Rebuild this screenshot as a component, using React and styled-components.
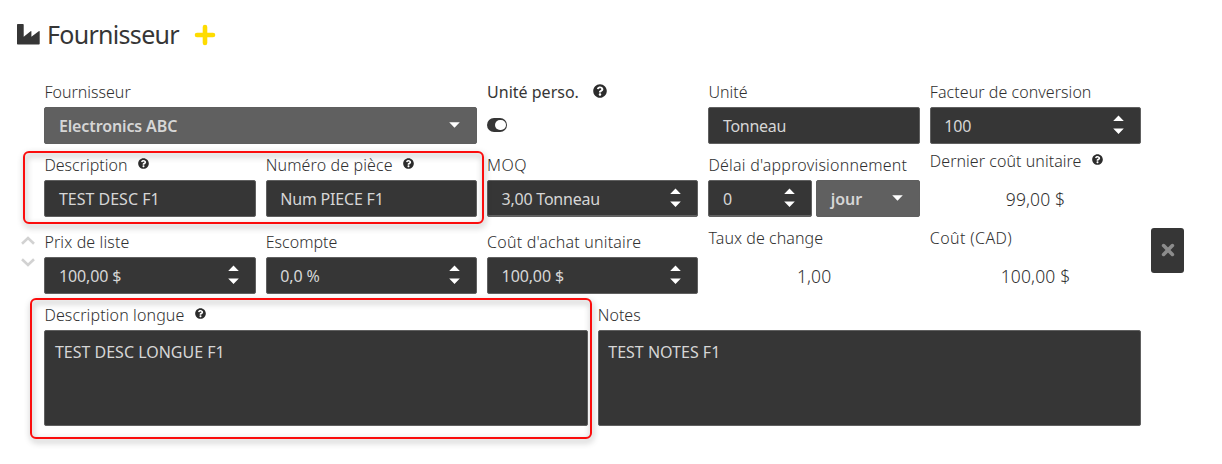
import React from 'react';
import styled, { createGlobalStyle, css } from 'styled-components';
import { FaQuestionCircle } from 'react-icons/fa';

const Global = createGlobalStyle`
  * { box-sizing: border-box; }
  body { margin: 0; background: #fff; color: #363636; font: 300 16px/20px "Noto Sans", "Open Sans", sans-serif; }
`;

const Page = styled.main`
  width: 1222px;
  height: 464px;
  overflow: hidden;
`;

const Header = styled.header`
  display: flex;
  align-items: center;
  height: 80px;
  padding: 0 0 11px 17px;
`;

const Title = styled.h1`
  margin: -2px 15px 0 7px;
  font-size: 25px;
  font-weight: 400;
  line-height: 32px;
  letter-spacing: -0.7px;
`;

const Body = styled.section`
  display: flex;
  padding-left: 21px;
`;

const Sorter = styled.div`
  display: flex;
  flex-direction: column;
  gap: 13px;
  width: 23.4px;
  padding-top: 156px;
`;

const Form = styled.div`
  position: relative;
  width: 1096.8px;
`;

const Grid = styled.div`
  display: grid;
  grid-template-columns: repeat(5, 1fr);
  grid-template-rows: 64px 64px 64px;
  column-gap: 10px;
  row-gap: 9px;
`;

const LongGrid = styled.div`
  display: grid;
  grid-template-columns: 1fr 1fr;
  column-gap: 10px;
  margin-top: 9px;
`;

const Cell = styled.div`
  display: flex;
  flex-direction: column;
  min-width: 0;
  ${p => p.$wide && css`grid-column: span 2;`}
  ${p => p.$lowered && css`margin-top: 4px; margin-bottom: -4px;`}
`;

const Label = styled.label`
  display: flex;
  flex: none;
  height: ${p => (p.$compact ? 20 : 27)}px;
  padding-top: ${p => (p.$compact ? 0 : 2)}px;
  margin-top: ${p => (p.$compact ? -2 : 0)}px;
  font-weight: ${p => (p.$strong ? 400 : 330)};
  letter-spacing: ${p => p.$track || 0}px;
  white-space: nowrap;
  color: ${p => (p.$strong ? '#363636' : '#303030')};
`;

const Help = styled(FaQuestionCircle)`
  flex: none;
  width: ${p => (p.$large ? 14 : 11)}px;
  height: ${p => (p.$large ? 14 : 11)}px;
  margin: ${p => (p.$large ? '2px 0 0 14px' : '3px 0 0 10.5px')};
  color: #2c2c2c;
`;

const Field = styled.div`
  display: flex;
  align-items: center;
  justify-content: space-between;
  flex: 1 1 0;
  height: 37px;
  min-height: 37px;
  padding: 0 16px 0 13.5px;
  border: 1px solid #606060;
  border-radius: 2px;
  background: #363636;
  box-shadow: ${p => (p.$thick ? 'inset 0 -1px #606060' : 'none')};
  color: #d6d6d6;
  font-weight: 400;
  letter-spacing: ${p => p.$track || 0}px;
  white-space: nowrap;
`;

const Select = styled(Field)`
  border-color: #5f5f5f;
  background: #606060;
  font-weight: 600;
`;

const Area = styled.div`
  height: 96px;
  padding: 11px 9.500px;
  border: 1px solid #606060;
  border-radius: 2px;
  background: #363636;
  color: #d6d6d6;
  font-weight: 400;
  letter-spacing: ${p => p.$track || 0}px;
`;

const Pair = styled.div`
  display: grid;
  grid-template-columns: 1fr 1fr;
  gap: 4px;
`;

const Value = styled.div`
  padding-top: 18px;
  font-size: 17.5px;
  font-weight: 330;
  line-height: 20px;
  text-align: center;
  letter-spacing: 0.15px;
  color: #303030;
`;

const Toggle = styled.span`
  display: flex;
  align-items: center;
  justify-content: flex-end;
  width: 20px;
  height: 14px;
  margin-top: 11px;
  padding-right: 1.500px;
  border-radius: 7px;
  background: #363636;

  &::after {
    content: '';
    width: 10.500px;
    height: 10.500px;
    border-radius: 50%;
    background: #fff;
  }
`;

const Delete = styled.button`
  display: flex;
  align-items: center;
  justify-content: center;
  width: 33px;
  height: 45px;
  margin: 148px 0 0 9.800px;
  padding: 0 0 1px 1px;
  border: 0;
  border-radius: 3px;
  background: #363636;
`;

const Highlight = styled.div`
  position: absolute;
  left: ${p => p.$left}px;
  top: ${p => p.$top}px;
  width: ${p => p.$width}px;
  height: ${p => p.$height}px;
  border: 2px solid #fb0d0d;
  border-radius: 6px;
  filter: drop-shadow(1px 3px 3px rgba(0, 0, 0, 0.4));
  pointer-events: none;
`;

const Glyph = styled.svg`
  flex: none;
  margin-top: ${p => -(p.$raise || 0)}px;
`;

const Factory = () => (
  <Glyph width="23" height="21" viewBox="0 0 23 21" fill="#363636">
    <path d="M.8 0H6q.7 0 .7.7V12.700L13.600 7.200q.8-.5.8.4v5.100L21.700 7.200q1-.6 1 .4V19.800q0 .8-.8.8H.8Q0 20.600 0 19.800V.8Q0 0 .8 0Z" />
  </Glyph>
);

const Plus = () => (
  <Glyph width="22" height="22" viewBox="0 0 22 22" stroke="#fedc00" strokeWidth="4.600" strokeLinecap="round">
    <path d="M11 3v16M3 11h16" />
  </Glyph>
);

const Chevron = ({ down }) => (
  <Glyph width="14" height="9" viewBox="0 0 14 9" fill="none" stroke="#d2d2d2" strokeWidth="2.600">
    <path d={down ? 'M1 1.300 7 7l6-5.700' : 'M1 7.700 7 2l6 5.700'} />
  </Glyph>
);

const Cross = () => (
  <Glyph width="14" height="14" viewBox="0 0 14 14" stroke="#8c8c8c" strokeWidth="3.600" strokeLinecap="round">
    <path d="m2.600 2.600 8.800 8.800m0-8.800-8.800 8.800" />
  </Glyph>
);

const Spinner = () => (
  <Glyph $raise={2} width="11" height="20" viewBox="0 0 11 20" fill="#fff">
    <path d="M5.500.6 10.800 6H.2ZM5.500 19 .2 13.500h10.600Z" />
  </Glyph>
);

const Caret = () => (
  <Glyph $raise={1} width="11" height="6" viewBox="0 0 11 6" fill="#fff">
    <path d="M5.500 5.800.2.300h10.600Z" />
  </Glyph>
);

const Input = ({ label, track, value, valueTrack, help, spinner, thick, lowered }) => (
  <Cell $lowered={lowered}>
    <Label $track={track}>{label}{help && <Help />}</Label>
    <Field $track={valueTrack} $thick={thick}>{value}{spinner && <Spinner />}</Field>
  </Cell>
);

const ReadOnly = ({ label, track, value, help, lowered }) => (
  <Cell $lowered={lowered}>
    <Label $compact $track={track}>{label}{help && <Help />}</Label>
    <Value>{value}</Value>
  </Cell>
);

export default function App() {
  return (
    <Page>
      <Global />
      <Header>
        <Factory />
        <Title>Fournisseur</Title>
        <Plus />
      </Header>
      <Body>
        <Sorter>
          <Chevron />
          <Chevron down />
        </Sorter>
        <Form>
          <Grid>
            <Cell $wide>
              <Label>Fournisseur</Label>
              <Select $track={-0.12}>Electronics ABC<Caret /></Select>
            </Cell>
            <Cell>
              <Label $strong>Unité perso.<Help $large /></Label>
              <Toggle />
            </Cell>
            <Input label="Unité" value="Tonneau" valueTrack={-0.3} />
            <Input label="Facteur de conversion" track={0.05} value="100" valueTrack={-0.2} spinner />

            <Input label="Description" value="TEST DESC F1" help />
            <Input label="Numéro de pièce" track={0.12} value="Num PIECE F1" valueTrack={-0.2} help />
            <Input label="MOQ" track={0.4} value="3,00 Tonneau" valueTrack={-0.23} spinner thick />
            <Cell>
              <Label $track={0.22}>Délai d'approvisionnement</Label>
              <Pair>
                <Field $thick>0<Spinner /></Field>
                <Select>jour<Caret /></Select>
              </Pair>
            </Cell>
            <ReadOnly label="Dernier coût unitaire" track={0.05} value="99,00 $" help />

            <Input lowered label="Prix de liste" track={0.12} value="100,00 $" valueTrack={-0.12} spinner />
            <Input lowered label="Escompte" value="0,0 %" valueTrack={-0.15} spinner />
            <Input lowered label="Coût d'achat unitaire" track={0.2} value="100,00 $" valueTrack={-0.12} spinner />
            <ReadOnly lowered label="Taux de change" track={0.06} value="1,00" />
            <ReadOnly lowered label="Coût (CAD)" track={0.38} value="100,00 $" />
          </Grid>
          <LongGrid>
            <Cell $lowered>
              <Label $track={0.12}>Description longue<Help /></Label>
              <Area>TEST DESC LONGUE F1</Area>
            </Cell>
            <Cell $lowered>
              <Label>Notes</Label>
              <Area>TEST NOTES F1</Area>
            </Cell>
          </LongGrid>
          <Highlight $left={-21.4} $top={71} $width={461} $height={73} />
          <Highlight $left={-14.4} $top={218} $width={562.4} $height={141} />
        </Form>
        <Delete aria-label="Supprimer"><Cross /></Delete>
      </Body>
    </Page>
  );
}
